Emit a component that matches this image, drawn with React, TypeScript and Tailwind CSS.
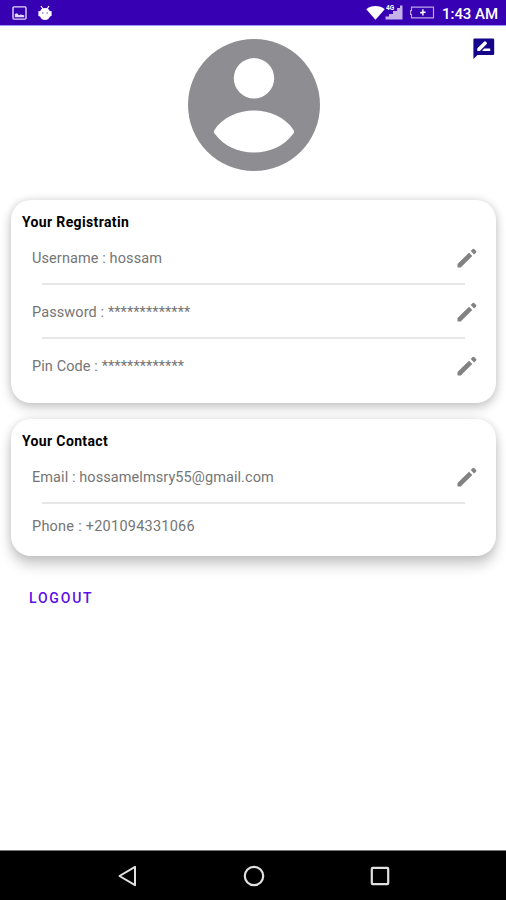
import { clsx } from 'clsx'
import type { ReactNode } from 'react'

function StatusBar() {
  return (
    <header className="flex h-[26px] shrink-0 items-center justify-between border-b border-[#9a94f5] bg-[#3700b3] pl-[12px] pr-2 text-white">
      <div className="flex items-center gap-[11px]">
        <svg width="15" height="14" viewBox="0 0 15 14" className="opacity-85">
          <rect x="1" y="0.9" width="13" height="12.2" rx="1" fill="none" stroke="currentColor" strokeWidth="1.4" />
          <path d="M2.8 11.2V8L5 7.2 7 9.2 8.6 8.4 12.2 9.2V11.2Z" fill="currentColor" />
        </svg>
        <svg width="14" height="16" viewBox="0 0 14 16">
          <path d="M3 1 5 4M11 1 9 4" stroke="currentColor" strokeWidth="1.2" />
          <path
            d="M7 3C9.6 3 11.4 4.4 11.8 6.3L13.6 6V11L11.9 11.4C11.2 13.7 9.3 15 7 15S2.8 13.7 2.1 11.4L0.4 11V6L2.2 6.3C2.6 4.4 4.4 3 7 3Z"
            fill="currentColor"
          />
          <circle cx="4.8" cy="8" r="0.7" fill="#3700b3" fillOpacity="0.7" />
          <circle cx="9.2" cy="8" r="0.7" fill="#3700b3" fillOpacity="0.7" />
        </svg>
      </div>
      <div className="flex items-center">
        <svg width="19" height="15" viewBox="0 0 19 15">
          <path d="M0.3 4.2C5 -0.2 14 -0.2 18.7 4.2L9.5 14.8Z" fill="currentColor" />
        </svg>
        <div className="relative h-[15px] w-[18px]">
          <svg width="18" height="15" viewBox="0 0 18 15" className="opacity-70">
            <path d="M0.5 14.5V11.5H4V9H8V6H12V3H15V0.5H17.5V14.5Z" fill="currentColor" />
          </svg>
          <span className="absolute left-[1px] top-0 text-[6.5px] font-bold leading-[7px]">4G</span>
        </div>
        <svg width="25" height="13" viewBox="0 0 25 13" className="ml-[7px]">
          <path
            d="M1.5 1.2H23.5V11.8H1.5V8.3H0.5V4.7H1.5Z"
            fill="none"
            stroke="currentColor"
            strokeOpacity="0.65"
            strokeWidth="1.2"
          />
          <path d="M12.2 3.3H13.6V5.5H15.6V7H13.6V9.6H12.2V7.4H10.2V5.8H12.2Z" fill="currentColor" />
        </svg>
        <span className="ml-[7px] pt-[2px] text-[15px] font-medium leading-5 tracking-[-0.05px]">1:43 AM</span>
      </div>
    </header>
  )
}

function Avatar() {
  return (
    <svg viewBox="0 0 132 132" className="mt-[13px] size-[132px]">
      <circle cx="66" cy="66" r="66" fill="#8e8d92" />
      <circle cx="66" cy="39.3" r="20.2" fill="#fff" />
      <path
        d="M26.5 91C34 78.5 51 71.5 66 71.5S98 78.5 105.500 91Q107 93 105 95C96 107 82 113.500 66 113.500S36 107 27 95Q25 93 26.500 91Z"
        fill="#fff"
      />
    </svg>
  )
}

function ReviewIcon() {
  return (
    <svg width="22" height="22" viewBox="0 0 22 22">
      <path d="M1.5 0.5H20Q21.2 0.5 21.2 1.7V15.8Q21.2 17 20 17H4.5L0.4 21V1.6Q0.4 0.5 1.5 0.5Z" fill="#14058a" />
      <path d="M4.3 12.9V10.3L11.3 3.5Q12 2.9 12.7 3.5L13.7 4.5Q14.3 5.2 13.7 5.9L6.9 12.9Z" fill="#fff" />
      <path d="M9 12.9 11.3 10.6H17.2V12.9Z" fill="#fff" />
    </svg>
  )
}

function PencilIcon() {
  return (
    <svg width="20" height="20" viewBox="0 0 20 20" fill="#828282">
      <path d="M0.5 15.9 12 4.7 15.3 8 4.2 19.1Q3.9 19.6 3.4 19.6H1.2Q0.5 19.6 0.5 18.9Z" />
      <path d="M13.7 3 15.7 1Q16.4 0.4 17.1 1L19.1 3Q19.8 3.7 19.1 4.4L17.1 6.4Z" />
    </svg>
  )
}

function Card({ title, className, children }: { title: string; className?: string; children: ReactNode }) {
  return (
    <section className={clsx('ml-[11px] mr-[10px] rounded-[20px] bg-white pt-3', className)}>
      <h2 className="pl-[11px] text-[14px] font-bold leading-5 tracking-[0.36px] text-black">{title}</h2>
      {children}
    </section>
  )
}

interface FieldProps {
  label: string
  value: string
  editable?: boolean
  className?: string
}

function Field({ label, value, editable = true, className }: FieldProps) {
  return (
    <div className={clsx('flex items-center justify-between pl-[21px] pr-[19px]', className)}>
      <p className="pt-[2px] text-[14.5px] leading-5 text-[#757575]">
        {label} : {value}
      </p>
      {editable && (
        <button aria-label={`Edit ${label}`}>
          <PencilIcon />
        </button>
      )}
    </div>
  )
}

function Divider() {
  return <div className="mx-[31px] h-[2px] bg-[#e7e7e7]" />
}

function NavBar() {
  return (
    <nav className="flex h-[50px] shrink-0 items-center justify-between border-t border-[#777] bg-black pl-[117px] pr-[116px] text-[#e0e0e0]">
      <svg width="20" height="22" viewBox="0 0 20 22" fill="none" stroke="currentColor" strokeWidth="2">
        <path d="M18 1.8V20.2L2.5 11Z" strokeLinejoin="round" />
      </svg>
      <svg width="22" height="22" viewBox="0 0 22 22" fill="none" stroke="currentColor" strokeWidth="2.2">
        <circle cx="11" cy="11" r="9.2" />
      </svg>
      <svg width="20" height="20" viewBox="0 0 20 20" fill="none" stroke="currentColor" strokeWidth="2.2">
        <rect x="1.8" y="1.8" width="16.4" height="16.4" rx="1" />
      </svg>
    </nav>
  )
}

export default function App() {
  return (
    <div className="flex h-[900px] w-[506px] flex-col bg-white font-[Roboto,sans-serif]">
      <StatusBar />

      <main className="flex flex-1 flex-col">
        <div className="grid h-[174px] grid-cols-[188px_132px_1fr]">
          <div />
          <Avatar />
          <button aria-label="Review profile" className="mr-[11px] mt-3 self-start justify-self-end">
            <ReviewIcon />
          </button>
        </div>

        <Card
          title="Your Registratin"
          className="h-[203px] tracking-[0.1px] shadow-[0_5px_12px_rgba(0,0,0,0.18),0_0_9px_rgba(0,0,0,0.13)]"
        >
          <Field label="Username" value="hossam" className="h-[51px] pt-px" />
          <Divider />
          <Field label="Password" value="*************" className="h-[52px] pt-px" />
          <Divider />
          <Field label="Pin Code" value="*************" className="h-[54px]" />
        </Card>

        <Card
          title="Your Contact"
          className="mt-4 h-[137px] tracking-[0.08px] shadow-[0_9px_13px_rgba(0,0,0,0.2),0_0_9px_rgba(0,0,0,0.12)]"
        >
          <Field label="Email" value="hossamelmsry55@gmail.com" className="h-[51px] pt-px" />
          <Divider />
          <Field label="Phone" value="+201094331066" editable={false} className="h-[43px] tracking-[0.24px]" />
        </Card>

        <button className="ml-[29px] mt-8 self-start text-[14px] font-medium leading-5 tracking-[1.8px] text-[#5a10e8]">
          LOGOUT
        </button>
      </main>

      <NavBar />
    </div>
  )
}
